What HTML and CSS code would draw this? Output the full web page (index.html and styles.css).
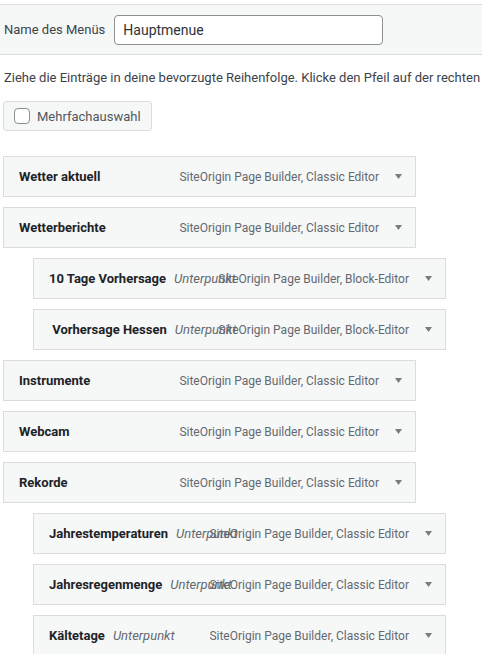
FILE: index.html
```html
<!DOCTYPE html>
<html>
	<head>
		<meta charset="UTF-8">
		<title>Menüs</title>
		<link rel="stylesheet" href="styles.css">
	</head>
	<body>
		<div class="menu-header">
			<label class="menu-name-label" for="menu-name">Name des Menüs</label>
			<input id="menu-name" class="menu-name" type="text" value="Hauptmenue">
		</div>
		<div class="menu-body">
			<p class="desc">Ziehe die Einträge in deine bevorzugte Reihenfolge. Klicke den Pfeil auf der rechten Seite des Eintrags, um weitere Konfigurationsmöglichkeiten anzuzeigen.</p>
			<label class="bulk-select">
				<span class="check"></span>
				<span>Mehrfachauswahl</span>
			</label>
			<ul id="menu-to-edit" class="menu">
				<li class="menu-item">
					<span class="item-title">Wetter aktuell</span>
					<span class="item-controls"><span class="item-type">SiteOrigin Page Builder, Classic Editor</span><svg class="arrow" width="7" height="5" viewBox="0 0 7 5"><path d="M0 0h7L3.5 5z"/></svg></span>
				</li>
				<li class="menu-item">
					<span class="item-title">Wetterberichte</span>
					<span class="item-controls"><span class="item-type">SiteOrigin Page Builder, Classic Editor</span><svg class="arrow" width="7" height="5" viewBox="0 0 7 5"><path d="M0 0h7L3.5 5z"/></svg></span>
				</li>
				<li class="menu-item depth-1">
					<span class="item-title">10 Tage Vorhersage</span><span class="is-submenu">Unterpunkt</span>
					<span class="item-controls"><span class="item-type">SiteOrigin Page Builder, Block-Editor</span><svg class="arrow" width="7" height="5" viewBox="0 0 7 5"><path d="M0 0h7L3.5 5z"/></svg></span>
				</li>
				<li class="menu-item depth-1">
					<span class="item-title">&nbsp;Vorhersage Hessen</span><span class="is-submenu">Unterpunkt</span>
					<span class="item-controls"><span class="item-type">SiteOrigin Page Builder, Block-Editor</span><svg class="arrow" width="7" height="5" viewBox="0 0 7 5"><path d="M0 0h7L3.5 5z"/></svg></span>
				</li>
				<li class="menu-item">
					<span class="item-title">Instrumente</span>
					<span class="item-controls"><span class="item-type">SiteOrigin Page Builder, Classic Editor</span><svg class="arrow" width="7" height="5" viewBox="0 0 7 5"><path d="M0 0h7L3.5 5z"/></svg></span>
				</li>
				<li class="menu-item">
					<span class="item-title">Webcam</span>
					<span class="item-controls"><span class="item-type">SiteOrigin Page Builder, Classic Editor</span><svg class="arrow" width="7" height="5" viewBox="0 0 7 5"><path d="M0 0h7L3.5 5z"/></svg></span>
				</li>
				<li class="menu-item">
					<span class="item-title">Rekorde</span>
					<span class="item-controls"><span class="item-type">SiteOrigin Page Builder, Classic Editor</span><svg class="arrow" width="7" height="5" viewBox="0 0 7 5"><path d="M0 0h7L3.5 5z"/></svg></span>
				</li>
				<li class="menu-item depth-1">
					<span class="item-title">Jahrestemperaturen</span><span class="is-submenu">Unterpunkt</span>
					<span class="item-controls"><span class="item-type">SiteOrigin Page Builder, Classic Editor</span><svg class="arrow" width="7" height="5" viewBox="0 0 7 5"><path d="M0 0h7L3.5 5z"/></svg></span>
				</li>
				<li class="menu-item depth-1">
					<span class="item-title">Jahresregenmenge</span><span class="is-submenu">Unterpunkt</span>
					<span class="item-controls"><span class="item-type">SiteOrigin Page Builder, Classic Editor</span><svg class="arrow" width="7" height="5" viewBox="0 0 7 5"><path d="M0 0h7L3.5 5z"/></svg></span>
				</li>
				<li class="menu-item depth-1">
					<span class="item-title">Kältetage</span><span class="is-submenu">Unterpunkt</span>
					<span class="item-controls"><span class="item-type">SiteOrigin Page Builder, Classic Editor</span><svg class="arrow" width="7" height="5" viewBox="0 0 7 5"><path d="M0 0h7L3.5 5z"/></svg></span>
				</li>
			</ul>
		</div>
	</body>
</html>
```
FILE: styles.css
```css
html{
	overflow: hidden;
}
body{
	margin: 0;
	font-family: Roboto, "Liberation Sans", sans-serif;
	font-size: 13px;
	color: #3c434a;
	background: #fff;
	overflow: hidden;
}
.menu-header{
	margin-top: 4px;
	height: 49px;
	padding-left: 4px;
	display: flex;
	align-items: center;
	background: #f6f7f7;
	border-top: 1px solid #dcdcde;
	border-bottom: 1px solid #dcdcde;
}
.menu-name-label{
	margin-right: 9px;
}
.menu-name{
	box-sizing: border-box;
	width: 269px;
	height: 30px;
	margin: 0;
	padding: 0 8px;
	font-family: inherit;
	font-size: 14px;
	color: #2c3338;
	border: 1px solid #8c8f94;
	border-radius: 4px;
	background: #fff;
}
.menu-body{
	padding-left: 3px;
	overflow: hidden;
}
.desc{
	margin: 13px 0 13px 1px;
	line-height: 20px;
	white-space: nowrap;
}
.bulk-select{
	box-sizing: border-box;
	display: inline-flex;
	align-items: center;
	height: 30px;
	padding: 0 10px;
	background: #f6f7f7;
	border: 1px solid #dcdcde;
	border-radius: 3px;
	color: #50575e;
}
.check{
	box-sizing: border-box;
	width: 16px;
	height: 16px;
	margin-right: 7px;
	border: 1px solid #8c8f94;
	border-radius: 4px;
	background: #fff;
}
.menu{
	margin: 25px 0 0;
	padding: 0;
	list-style: none;
}
.menu-item{
	position: relative;
	box-sizing: border-box;
	width: 413px;
	height: 41px;
	margin-bottom: 10px;
	padding: 0 15px;
	display: flex;
	align-items: center;
	background: #f6f7f7;
	border: 1px solid #dcdcde;
	white-space: nowrap;
}
.menu-item.depth-1{
	margin-left: 30px;
}
.item-title{
	font-weight: bold;
	color: #1d2327;
}
.is-submenu{
	margin-left: 8px;
	font-style: italic;
	color: #646970;
}
/* type label and arrow sit on top of the title row */
.item-controls{
	position: absolute;
	right: 13px;
	top: 0;
	bottom: 0;
	display: flex;
	align-items: center;
	color: #646970;
}
.item-type{
	font-size: 12px;
}
.arrow{
	margin-left: 16px;
	fill: #787c82;
}
```
